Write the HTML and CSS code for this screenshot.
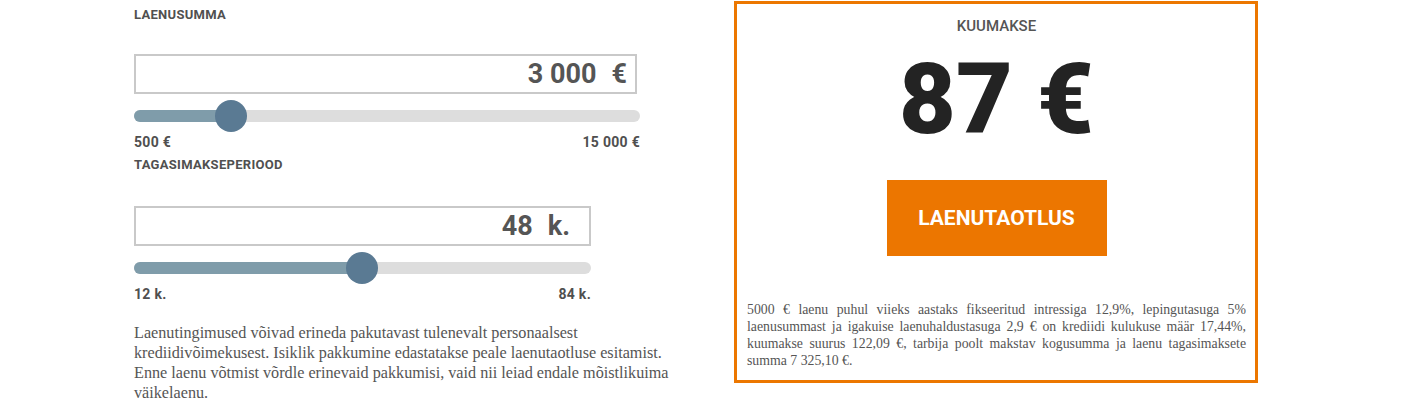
FILE: index.html
```html
<!DOCTYPE html>
<html lang="et">
<head>
<meta charset="utf-8">
<title>Laenukalkulaator</title>
<link rel="stylesheet" href="styles.css">
</head>
<body>
<div class="calc">
  <div class="inputs">
    <div class="label">LAENUSUMMA</div>
    <div class="field field--wide">
      <span class="field-value">3 000</span><span class="field-unit">€</span>
    </div>
    <div class="slider slider--wide">
      <div class="slider-fill" style="width:97px"></div>
      <div class="slider-thumb" style="left:97px"></div>
    </div>
    <div class="range range--wide"><span>500 €</span><span>15 000 €</span></div>

    <div class="label label--second">TAGASIMAKSEPERIOOD</div>
    <div class="field field--narrow">
      <span class="field-value">48</span><span class="field-unit">k.</span>
    </div>
    <div class="slider slider--narrow">
      <div class="slider-fill" style="width:228px"></div>
      <div class="slider-thumb" style="left:228px"></div>
    </div>
    <div class="range range--narrow"><span>12 k.</span><span>84 k.</span></div>

    <p class="note">Laenutingimused võivad erineda pakutavast tulenevalt personaalsest krediidivõimekusest. Isiklik pakkumine edastatakse peale laenutaotluse esitamist. Enne laenu võtmist võrdle erinevaid pakkumisi, vaid nii leiad endale mõistlikuima väikelaenu.</p>
  </div>

  <div class="result">
    <div class="result-title">KUUMAKSE</div>
    <div class="result-amount">87 €</div>
    <a class="apply" href="#">LAENUTAOTLUS</a>
    <p class="disclaimer">5000 € laenu puhul viieks aastaks fikseeritud intressiga 12,9%, lepingutasuga 5% laenusummast ja igakuise laenuhaldustasuga 2,9 € on krediidi kulukuse määr 17,44%, kuumakse suurus 122,09 €, tarbija poolt makstav kogusumma ja laenu tagasimaksete summa 7 325,10 €.</p>
  </div>
</div>
</body>
</html>
```

FILE: styles.css
```css
html, body {
  margin: 0;
  background: #fff;
}

.calc {
  display: flex;
  align-items: flex-start;
  padding-left: 134px;
  font-family: Roboto, "DejaVu Sans", sans-serif;
  color: #4f4f4f;
}

/* left column: inputs and sliders */
.inputs {
  width: 540px;
  flex: none;
  padding-top: 5px;
}

.label {
  font-size: 13px;
  font-weight: 700;
  line-height: 20px;
  letter-spacing: 0.3px;
  color: #505050;
}

.label--second {
  margin-top: 5px;
}

.field {
  box-sizing: border-box;
  height: 40px;
  margin-top: 29px;
  border: 2px solid #c9c9c9;
  display: flex;
  align-items: center;
  justify-content: flex-end;
  font-size: 27px;
  font-weight: 700;
  color: #555;
}

.field--wide { width: 503px; padding-right: 8px; }
.field--narrow { width: 457px; padding-right: 19px; margin-top: 31px; }

.field-unit {
  margin-left: 15px;
}

.slider {
  position: relative;
  height: 12px;
  margin-top: 16px;
  border-radius: 6px;
  background: #dddddd;
}

.slider--wide { width: 506px; }
.slider--narrow { width: 457px; }

.slider-fill {
  height: 100%;
  border-radius: 6px 0 0 6px;
  background: #7f9caa;
}

.slider-thumb {
  position: absolute;
  top: -10px;
  width: 32px;
  height: 32px;
  margin-left: -16px;
  border-radius: 50%;
  background: #5a7a93;
}

.range {
  display: flex;
  justify-content: space-between;
  margin-top: 12px;
  font-size: 14px;
  font-weight: 700;
  line-height: 16px;
  letter-spacing: 0.3px;
  color: #4f4f4f;
}

.range--wide { width: 506px; }
.range--narrow { width: 457px; }

.note {
  margin: 21px 0 0;
  font-family: "Liberation Serif", "Times New Roman", serif;
  font-size: 16.2px;
  line-height: 20px;
  color: #555;
}

/* right column: monthly payment card */
.result {
  box-sizing: border-box;
  flex: none;
  width: 524px;
  height: 382px;
  margin-top: 1px;
  margin-left: 60px;
  border: 3px solid #ec7700;
  display: flex;
  flex-direction: column;
  align-items: center;
  padding: 12px 9px 0 10px;
}

.result-title {
  font-size: 15px;
  font-weight: 500;
  line-height: 20px;
  color: #555;
}

.result-amount {
  margin-top: 14px;
  font-size: 98px;
  font-weight: 900;
  line-height: 100px;
  color: #232323;
}

.apply {
  margin-top: 30px;
  width: 220px;
  height: 76px;
  display: flex;
  align-items: center;
  justify-content: center;
  background: #ec7600;
  color: #fff;
  font-size: 21px;
  font-weight: 700;
  text-decoration: none;
}

.disclaimer {
  align-self: stretch;
  margin: 45px 0 0;
  font-family: "Liberation Serif", "Times New Roman", serif;
  font-size: 13.8px;
  line-height: 17px;
  text-align: justify;
  color: #555;
}
```
